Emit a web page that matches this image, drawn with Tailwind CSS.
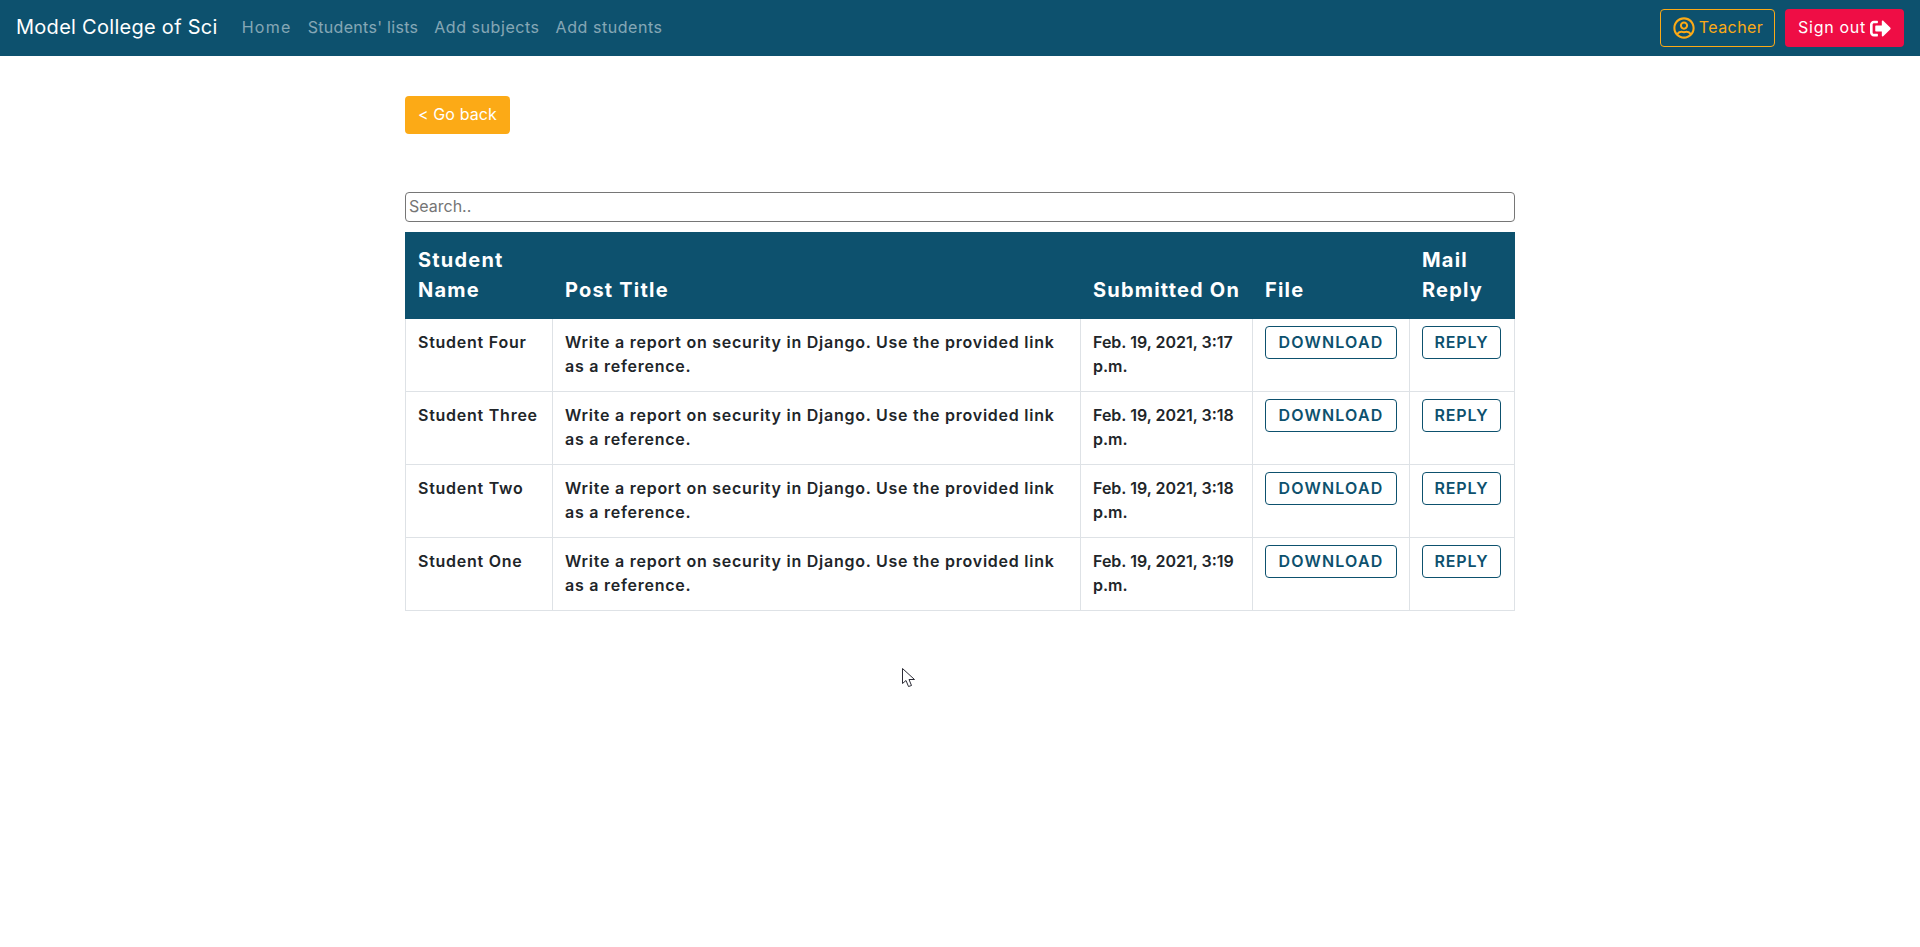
<!DOCTYPE html>
<html lang="en">
<head>
    <meta charset="UTF-8">
    <meta name="viewport" content="width=device-width, initial-scale=1.0">
    <title>Model College of Sci</title>
    <script src="https://cdn.jsdelivr.net/npm/@tailwindcss/browser@4"></script>
</head>
<body class="relative bg-white font-['Inter',sans-serif] min-h-[947px] overflow-hidden">
    <nav class="h-14 bg-[#0d516e] flex items-center pl-4 pr-4">
        <a href="#" class="text-white text-xl tracking-[0.28px] mr-6 pb-[2px] whitespace-nowrap">Model College of Sci</a>
        <div class="flex gap-4 text-white/50 text-base tracking-[0.55px] pb-[2px]">
            <a href="#" class="tracking-[1.3px]">Home</a>
            <a href="#" class="tracking-[0.3px]">Students' lists</a>
            <a href="#">Add subjects</a>
            <a href="#">Add students</a>
        </div>
        <div class="ml-auto flex gap-[10px]">
            <a href="#" class="h-[38px] w-[115px] pl-px flex items-center justify-center gap-1 border border-[#fcaa16] rounded text-[#fcaa16] text-base tracking-[0.4px]">
                <svg class="w-[22px] h-[22px] fill-current" viewBox="0 0 496 512"><path d="M248 104c-53 0-96 43-96 96s43 96 96 96 96-43 96-96-43-96-96-96zm0 144c-26.500 0-48-21.500-48-48s21.500-48 48-48 48 21.500 48 48-21.500 48-48 48zm0-240C111 8 0 119 0 256s111 248 248 248 248-111 248-248S385 8 248 8zm0 448c-49.700 0-95.100-18.300-130.100-48.400 14.900-23 40.400-38.500 69.600-39.500 20.800 6.400 40.600 9.600 60.500 9.600s39.700-3.100 60.500-9.600c29.200 1 54.700 16.500 69.600 39.500-35 30.100-80.400 48.400-130.100 48.400zm162.700-84.100c-24.400-31.400-62.100-51.900-105.100-51.900-10.200 0-26 9.600-57.600 9.600-31.500 0-47.400-9.600-57.600-9.600-42.900 0-80.600 20.500-105.100 51.900C61.900 339.200 48 299.200 48 256c0-110.300 89.700-200 200-200s200 89.700 200 200c0 43.200-13.900 83.200-37.300 115.900z"/></svg>
                <span class="pb-[2px]">Teacher</span>
            </a>
            <a href="#" class="h-[38px] w-[119px] flex items-center justify-center gap-1 rounded bg-[#ef0d45] text-white text-base tracking-[0.7px]">
                <span class="pb-[2px]">Sign out</span>
                <svg class="w-[21px] h-[21px] fill-current" viewBox="0 0 512 512"><path d="M497 273L329 441c-15 15-41 4.500-41-17v-96H152c-13.300 0-24-10.700-24-24v-96c0-13.300 10.700-24 24-24h136V88c0-21.400 25.900-32 41-17l168 168c9.300 9.400 9.300 24.600 0 34zM192 436v-40c0-6.600-5.400-12-12-12H96c-17.700 0-32-14.300-32-32V160c0-17.700 14.300-32 32-32h84c6.600 0 12-5.400 12-12V76c0-6.600-5.400-12-12-12H96c-53 0-96 43-96 96v192c0 53 43 96 96 96h84c6.600 0 12-5.400 12-12z"/></svg>
            </a>
        </div>
    </nav>

    <main class="w-[1110px] mx-auto pt-10">
        <a href="#" class="inline-flex items-center justify-center w-[105px] h-[38px] pb-[2px] bg-[#fcaa16] rounded text-white text-base tracking-[0.1px]">&lt; Go back</a>

        <input type="text" placeholder="Search.." class="block w-full h-[30px] mt-[58px] px-[3px] pb-[2px] border border-[#767676] rounded-sm text-base placeholder:text-[#757575]">

        <table class="w-[1109px] mt-[10px] table-fixed border-collapse text-[#212529] text-base font-semibold tracking-[0.75px]">
            <thead class="bg-[#0d516e] text-white text-xl font-bold tracking-[1.2px]">
                <tr class="h-[86px]">
                    <th class="w-[147px] px-3 pb-[13px] border border-[#0d516e] align-bottom text-left leading-[30px]">Student Name</th>
                    <th class="w-[528px] px-3 pb-[13px] border border-[#0d516e] align-bottom text-left leading-[30px]">Post Title</th>
                    <th class="w-[172px] px-3 pb-[13px] border border-[#0d516e] align-bottom text-left leading-[30px] whitespace-nowrap">Submitted On</th>
                    <th class="w-[157px] px-3 pb-[13px] border border-[#0d516e] align-bottom text-left leading-[30px]">File</th>
                    <th class="w-[105px] px-3 pb-[13px] border border-[#0d516e] align-bottom text-left leading-[30px]">Mail Reply</th>
                </tr>
            </thead>
            <tbody>
                <tr class="h-[73px]">
                    <td class="border border-[#dee2e6] px-3 pt-[11px] pb-3 align-top">Student Four</td>
                    <td class="border border-[#dee2e6] px-3 pt-[11px] pb-3 align-top">Write a report on security in Django. Use the provided link as a reference.</td>
                    <td class="border border-[#dee2e6] px-3 pt-[11px] pb-3 align-top tracking-normal">Feb. 19, 2021, 3:17 p.m.</td>
                    <td class="border border-[#dee2e6] px-3 py-[7px] align-top"><a href="#" class="flex items-center justify-center w-[132px] h-[33px] pb-px border border-[#0d516e] rounded text-[#0d516e] tracking-[1.2px]">DOWNLOAD</a></td>
                    <td class="border border-[#dee2e6] px-3 py-[7px] align-top"><a href="#" class="flex items-center justify-center w-[79px] h-[33px] pb-px border border-[#0d516e] rounded text-[#0d516e] tracking-[0.8px]">REPLY</a></td>
                </tr>
                <tr class="h-[73px]">
                    <td class="border border-[#dee2e6] px-3 pt-[11px] pb-3 align-top">Student Three</td>
                    <td class="border border-[#dee2e6] px-3 pt-[11px] pb-3 align-top">Write a report on security in Django. Use the provided link as a reference.</td>
                    <td class="border border-[#dee2e6] px-3 pt-[11px] pb-3 align-top tracking-normal">Feb. 19, 2021, 3:18 p.m.</td>
                    <td class="border border-[#dee2e6] px-3 py-[7px] align-top"><a href="#" class="flex items-center justify-center w-[132px] h-[33px] pb-px border border-[#0d516e] rounded text-[#0d516e] tracking-[1.2px]">DOWNLOAD</a></td>
                    <td class="border border-[#dee2e6] px-3 py-[7px] align-top"><a href="#" class="flex items-center justify-center w-[79px] h-[33px] pb-px border border-[#0d516e] rounded text-[#0d516e] tracking-[0.8px]">REPLY</a></td>
                </tr>
                <tr class="h-[73px]">
                    <td class="border border-[#dee2e6] px-3 pt-[11px] pb-3 align-top">Student Two</td>
                    <td class="border border-[#dee2e6] px-3 pt-[11px] pb-3 align-top">Write a report on security in Django. Use the provided link as a reference.</td>
                    <td class="border border-[#dee2e6] px-3 pt-[11px] pb-3 align-top tracking-normal">Feb. 19, 2021, 3:18 p.m.</td>
                    <td class="border border-[#dee2e6] px-3 py-[7px] align-top"><a href="#" class="flex items-center justify-center w-[132px] h-[33px] pb-px border border-[#0d516e] rounded text-[#0d516e] tracking-[1.2px]">DOWNLOAD</a></td>
                    <td class="border border-[#dee2e6] px-3 py-[7px] align-top"><a href="#" class="flex items-center justify-center w-[79px] h-[33px] pb-px border border-[#0d516e] rounded text-[#0d516e] tracking-[0.8px]">REPLY</a></td>
                </tr>
                <tr class="h-[73px]">
                    <td class="border border-[#dee2e6] px-3 pt-[11px] pb-3 align-top">Student One</td>
                    <td class="border border-[#dee2e6] px-3 pt-[11px] pb-3 align-top">Write a report on security in Django. Use the provided link as a reference.</td>
                    <td class="border border-[#dee2e6] px-3 pt-[11px] pb-3 align-top tracking-normal">Feb. 19, 2021, 3:19 p.m.</td>
                    <td class="border border-[#dee2e6] px-3 py-[7px] align-top"><a href="#" class="flex items-center justify-center w-[132px] h-[33px] pb-px border border-[#0d516e] rounded text-[#0d516e] tracking-[1.2px]">DOWNLOAD</a></td>
                    <td class="border border-[#dee2e6] px-3 py-[7px] align-top"><a href="#" class="flex items-center justify-center w-[79px] h-[33px] pb-px border border-[#0d516e] rounded text-[#0d516e] tracking-[0.8px]">REPLY</a></td>
                </tr>
            </tbody>
        </table>
    </main>

    <!-- mouse pointer caught in the shot -->
    <svg class="absolute left-[902px] top-[668px] w-[13px] h-[20px]" viewBox="0 0 13 20"><path d="M0.5 0.5V15.5L4 12.500L6.500 18.500L9.500 17.500L7 11.500H12.500Z" fill="#fff" stroke="#2b2b35" stroke-width="1"/></svg>
</body>
</html>
